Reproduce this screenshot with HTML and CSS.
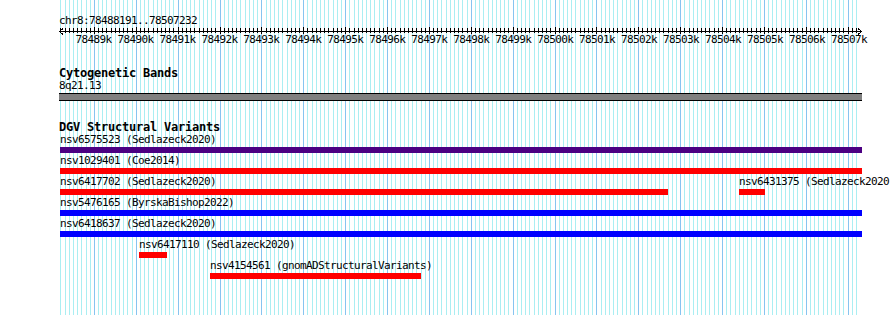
FILE: index.html
```html
<!DOCTYPE html>
<html>
<head>
<meta charset="utf-8">
<link rel="stylesheet" href="styles.css">
</head>
<body>
<div class="canvas">
  <div class="grid">
    <i></i><i></i><i></i><i></i><i></i><i></i><i></i><i></i><i class="M"></i><i></i><i></i><i></i><i></i><i></i><i></i><i></i><i></i><i></i>
    <i class="M"></i><i></i><i></i><i></i><i></i><i></i><i></i><i></i><i></i><i></i>
    <i class="M"></i><i></i><i></i><i></i><i></i><i></i><i></i><i></i><i></i><i></i>
    <i class="M"></i><i></i><i></i><i></i><i></i><i></i><i></i><i></i><i></i><i></i>
    <i class="M"></i><i></i><i></i><i></i><i></i><i></i><i></i><i></i><i></i><i></i>
    <i class="M"></i><i></i><i></i><i></i><i></i><i></i><i></i><i></i><i></i><i></i>
    <i class="M"></i><i></i><i></i><i></i><i></i><i></i><i></i><i></i><i></i><i></i>
    <i class="M"></i><i></i><i></i><i></i><i></i><i></i><i></i><i></i><i></i><i></i>
    <i class="M"></i><i></i><i></i><i></i><i></i><i></i><i></i><i></i><i></i><i></i>
    <i class="M"></i><i></i><i></i><i></i><i></i><i></i><i></i><i></i><i></i><i></i>
    <i class="M"></i><i></i><i></i><i></i><i></i><i></i><i></i><i></i><i></i><i></i>
    <i class="M"></i><i></i><i></i><i></i><i></i><i></i><i></i><i></i><i></i><i></i>
    <i class="M"></i><i></i><i></i><i></i><i></i><i></i><i></i><i></i><i></i><i></i>
    <i class="M"></i><i></i><i></i><i></i><i></i><i></i><i></i><i></i><i></i><i></i>
    <i class="M"></i><i></i><i></i><i></i><i></i><i></i><i></i><i></i><i></i><i></i>
    <i class="M"></i><i></i><i></i><i></i><i></i><i></i><i></i><i></i><i></i><i></i>
    <i class="M"></i><i></i><i></i><i></i><i></i><i></i><i></i><i></i><i></i><i></i>
    <i class="M"></i><i></i><i></i><i></i><i></i><i></i><i></i><i></i><i></i><i></i>
    <i class="M"></i><i></i><i></i>
  </div>
  <div class="content">
    <div class="ruler">
      <div class="loc">chr8:78488191..78507232</div>
      <svg class="axis" width="803" height="7" viewBox="0 0 803 7" shape-rendering="crispEdges">
        <line x1="0" y1="3.5" x2="803" y2="3.5" stroke="#000" stroke-width="1"/>
        <polyline points="4,0.5 0.5,3.5 4,6.5" fill="none" stroke="#000" stroke-width="1"/>
        <polyline points="799,0.5 802.5,3.5 799,6.5" fill="none" stroke="#000" stroke-width="1"/>
      </svg>
      <div class="ticklabels">
        <span>78489k</span><span>78490k</span><span>78491k</span><span>78492k</span><span>78493k</span><span>78494k</span><span>78495k</span><span>78496k</span><span>78497k</span><span>78498k</span><span>78499k</span><span>78500k</span><span>78501k</span><span>78502k</span><span>78503k</span><span>78504k</span><span>78505k</span><span>78506k</span><span>78507k</span>
      </div>
    </div>

    <div class="track cyto">
      <div class="title">Cytogenetic Bands</div>
      <div class="label">8q21.13</div>
      <div class="band"></div>
    </div>

    <div class="track dgv">
      <div class="title">DGV Structural Variants</div>
      <div class="row">
        <div class="feat" style="margin-left:1px"><div class="label">nsv6575523 (Sedlazeck2020)</div><div class="bar purple" style="width:802px"></div></div>
      </div>
      <div class="row">
        <div class="feat" style="margin-left:1px"><div class="label">nsv1029401 (Coe2014)</div><div class="bar red" style="width:802px"></div></div>
      </div>
      <div class="row">
        <div class="feat" style="margin-left:1px"><div class="label">nsv6417702 (Sedlazeck2020)</div><div class="bar red" style="width:608px"></div></div>
        <div class="feat" style="margin-left:680px"><div class="label">nsv6431375 (Sedlazeck2020)</div><div class="bar red" style="width:26px"></div></div>
      </div>
      <div class="row">
        <div class="feat" style="margin-left:1px"><div class="label">nsv5476165 (ByrskaBishop2022)</div><div class="bar blue" style="width:802px"></div></div>
      </div>
      <div class="row">
        <div class="feat" style="margin-left:1px"><div class="label">nsv6418637 (Sedlazeck2020)</div><div class="bar blue" style="width:802px"></div></div>
      </div>
      <div class="row">
        <div class="feat" style="margin-left:80px"><div class="label">nsv6417110 (Sedlazeck2020)</div><div class="bar red" style="width:28px"></div></div>
      </div>
      <div class="row">
        <div class="feat" style="margin-left:151px"><div class="label">nsv4154561 (gnomADStructuralVariants)</div><div class="bar red" style="width:211px"></div></div>
      </div>
    </div>
  </div>
</div>
</body>
</html>
```

FILE: styles.css
```css
html, body {
  margin: 0;
  padding: 0;
  width: 890px;
  height: 315px;
  overflow: hidden;
  background: #fff;
}

body {
  font-family: "DejaVu Sans Mono", monospace;
  font-size: 11px;
  letter-spacing: -0.62px;
  line-height: 12px;
  color: #000;
}

.canvas {
  margin-left: 59px;
  width: 803px;
  height: 315px;
  display: grid;
}

.canvas > .grid,
.canvas > .content {
  grid-area: 1 / 1;
}

.grid {
  display: flex;
  padding-left: 1.4px;
  height: 315px;
}

.grid i {
  flex: none;
  width: 1px;
  margin-right: 3.198px;
  height: 315px;
  background: linear-gradient(#000, #000) 0 28px / 1px 5px no-repeat, #aaeef2;
}

.grid i.M {
  background: linear-gradient(#000, #000) 0 27px / 1px 7px no-repeat, #88c4f0;
}

.content {
  min-width: 0;
}

.ruler {
  padding-top: 15px;
}

.loc {
  height: 12px;
  white-space: nowrap;
}

.axis {
  display: block;
  margin-top: 1px;
}

.ticklabels {
  display: flex;
  margin-top: -1px;
  padding-left: 13.5px;
  height: 12px;
}

.ticklabels span {
  flex: none;
  width: 41.98px;
  white-space: nowrap;
  display: flex;
  justify-content: center;
}

.title {
  font-weight: bold;
  font-size: 12px;
  letter-spacing: -0.22px;
  line-height: 13px;
  height: 13px;
  white-space: nowrap;
}

.label {
  height: 12px;
  white-space: nowrap;
}

.cyto {
  margin-top: 21px;
}

.band {
  margin-top: 1px;
  height: 6px;
  background: #808080;
  border-top: 1px solid #000;
  border-bottom: 1px solid #000;
}

.dgv {
  margin-top: 20px;
}

.row {
  display: grid;
  height: 21px;
}

.feat {
  grid-area: 1 / 1;
  justify-self: start;
}

.bar {
  margin-top: 1px;
  height: 6px;
}

.purple { background: #4b0082; }
.red { background: #ff0000; }
.blue { background: #0000ff; }
```
